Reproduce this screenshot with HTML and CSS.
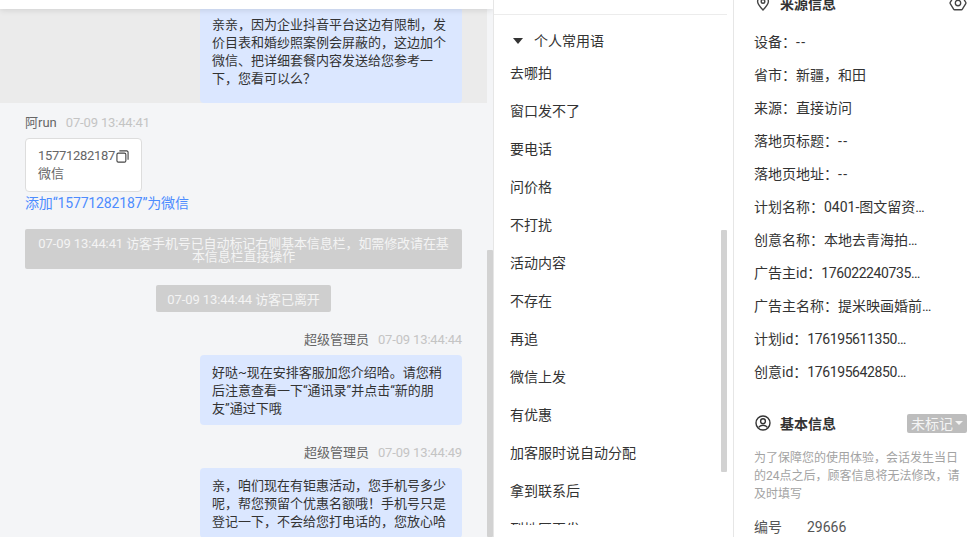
FILE: index.html
```html
<!doctype html>
<html lang="zh">
  <head>
    <meta charset="UTF-8" />
    <meta name="viewport" content="width=device-width, initial-scale=1.0" />
    <title>会话详情</title>
    <link rel="stylesheet" href="styles.css">
  </head>
  <body>
    <div class="page">
      <section class="chat">
        <div class="top-bar"></div>
        <div class="chat-scroll">
          <div class="highlight">
            <div class="bubble">亲亲，因为企业抖音平台这边有限制，发价目表和婚纱照案例会屏蔽的，这边加个微信、把详细套餐内容发送给您参考一下，您看可以么？</div>
          </div>

          <div class="msg-list">
            <div class="msg-head">
              <span class="name">阿run</span>
              <span class="time">07-09 13:44:41</span>
            </div>
            <div class="card">
              <div class="card-phone">
                15771282187<svg class="copy-icon" viewBox="0 0 14 14" fill="none" stroke="#444" stroke-width="1.2"><rect x="1" y="3.4" width="9.6" height="9.6" rx="1.5"/><path d="M3.6 1h8a1.4 1.4 0 0 1 1.4 1.4v8"/></svg>
              </div>
              <div>微信</div>
            </div>
            <div class="add-link">添加“15771282187”为微信</div>

            <div class="notice notice-wide">07-09 13:44:41 访客手机号已自动标记右侧基本信息栏，如需修改请在基本信息栏直接操作</div>
            <div class="notice">07-09 13:44:44 访客已离开</div>

            <div class="msg-head msg-head-right">
              <span class="name">超级管理员</span>
              <span class="time">07-09 13:44:44</span>
            </div>
            <div class="bubble">好哒~现在安排客服加您介绍哈。请您稍后注意查看一下“通讯录”并点击“新的朋友”通过下哦</div>

            <div class="msg-head msg-head-right">
              <span class="name">超级管理员</span>
              <span class="time">07-09 13:44:49</span>
            </div>
            <div class="bubble">亲，咱们现在有钜惠活动，您手机号多少呢，帮您预留个优惠名额哦！手机号只是登记一下，不会给您打电话的，您放心哈</div>
          </div>
        </div>
        <div class="scrollbar chat-thumb"></div>
      </section>

      <section class="phrases">
        <div class="phrases-line"></div>
        <div class="phrases-title"><span class="caret"></span>个人常用语</div>
        <ul class="phrase-list">
          <li>去哪拍</li>
          <li>窗口发不了</li>
          <li>要电话</li>
          <li>问价格</li>
          <li>不打扰</li>
          <li>活动内容</li>
          <li>不存在</li>
          <li>再追</li>
          <li>微信上发</li>
          <li>有优惠</li>
          <li>加客服时说自动分配</li>
          <li>拿到联系后</li>
          <li>到地区再发</li>
        </ul>
        <div class="scrollbar phrases-thumb"></div>
      </section>

      <aside class="info">
        <div class="section-title source-title">
          <svg class="title-icon pin-icon" viewBox="0 0 16 16" fill="none" stroke="#444" stroke-width="1.4"><path d="M8 15C5 12 2.6 9.5 2.6 6.6a5.4 5.4 0 0 1 10.8 0C13.4 9.5 11 12 8 15z"/><circle cx="8" cy="6.4" r="1.8"/></svg>
          <span>来源信息</span>
          <svg class="hex-icon" viewBox="0 0 16 16" fill="none" stroke="#444" stroke-width="1.2"><path d="M5 2h6a1 1 0 0 1 .9.5l3 5a1 1 0 0 1 0 1l-3 5a1 1 0 0 1-.9.5H5a1 1 0 0 1-.9-.5l-3-5a1 1 0 0 1 0-1l3-5A1 1 0 0 1 5 2z"/><circle cx="8" cy="8" r="2.4"/></svg>
        </div>
        <div class="info-row">设备：<span class="dash">--</span></div>
        <div class="info-row">省市：新疆，和田</div>
        <div class="info-row">来源：直接访问</div>
        <div class="info-row">落地页标题：<span class="dash">--</span></div>
        <div class="info-row">落地页地址：<span class="dash">--</span></div>
        <div class="info-row">计划名称：<span class="clip">0401-图文留资-婚纱照</span></div>
        <div class="info-row">创意名称：<span class="clip">本地去青海拍婚纱照</span></div>
        <div class="info-row">广告主id：<span class="clip num">1760222407351809</span></div>
        <div class="info-row">广告主名称：<span class="clip">提米映画婚前摄影</span></div>
        <div class="info-row">计划id：<span class="clip num">1761956113504296</span></div>
        <div class="info-row">创意id：<span class="clip num">1761956428501234</span></div>

        <div class="section-title base-title">
          <svg class="title-icon" viewBox="0 0 16 16" fill="none" stroke="#333" stroke-width="1.4"><circle cx="8" cy="8" r="7"/><circle cx="8" cy="6.2" r="2.4"/><path d="M3.6 12.4c1-1.6 2.6-2.2 4.4-2.2s3.4.6 4.4 2.2"/></svg>
          <span>基本信息</span>
          <div class="tag">未标记<span class="tag-caret"></span></div>
        </div>
        <p class="hint">为了保障您的使用体验，会话发生当日的24点之后，顾客信息将无法修改，请及时填写</p>
        <div class="field"><span class="field-label">编号</span>29666</div>
      </aside>
    </div>
  </body>
</html>
```

FILE: styles.css
```css
* {
  margin: 0;
  padding: 0;
  box-sizing: border-box;
}

html,
body {
  height: 100%;
  overflow: hidden;
}

body {
  font-family: Roboto, "Noto Sans CJK SC", "Noto Sans", sans-serif;
  font-size: 14px;
  color: #333;
  background: #fff;
}

.page {
  display: flex;
  height: 537px;
}

/* Chat column */
.chat {
  position: relative;
  width: 493px;
  height: 100%;
  overflow: hidden;
  background: #f4f5f7;
}

.top-bar {
  position: absolute;
  top: 0;
  left: 0;
  right: 0;
  height: 9px;
  background: #fff;
  box-shadow: 0 1px 6px rgba(0, 0, 0, 0.12);
}

.chat-scroll {
  width: 487px;
}

.highlight {
  display: flex;
  justify-content: flex-end;
  height: 103px;
  padding: 7px 25px 0;
  background: #ebebeb;
}

.bubble {
  width: 262px;
  padding: 9px 12px 7px;
  margin-left: auto;
  font-size: 13px;
  line-height: 18px;
  color: #333;
  background: #dbe7ff;
  border-radius: 4px;
}

.msg-list {
  display: flex;
  flex-direction: column;
  padding: 10px 25px 0;
}

.msg-head {
  display: flex;
  align-items: center;
  gap: 9px;
  height: 18px;
  padding-top: 2px;
  font-size: 13px;
  line-height: 18px;
}

.msg-head-right {
  justify-content: flex-end;
  margin-top: 18px;
  margin-bottom: 7px;
}

.name {
  color: #666;
}

.time {
  letter-spacing: -0.15px;
  color: #c4c4c4;
}

.card {
  width: 117px;
  height: 54px;
  margin-top: 7px;
  padding: 8px 12px 6px;
  font-size: 13px;
  line-height: 18px;
  color: #666;
  background: #fff;
  border: 1px solid #ddd;
  border-radius: 4px;
}

.card-phone {
  display: flex;
  align-items: center;
  letter-spacing: -0.3px;
  white-space: nowrap;
}

.copy-icon {
  width: 13px;
  height: 13px;
  margin-left: 1px;
  flex-shrink: 0;
}

.add-link {
  margin-top: 2px;
  font-size: 14px;
  line-height: 18px;
  letter-spacing: -0.15px;
  color: #4d8cff;
}

.notice {
  align-self: center;
  margin-top: 16px;
  padding: 8px 11px 6px;
  font-size: 13px;
  line-height: 13px;
  letter-spacing: -0.1px;
  text-align: center;
  color: #f4f4f4;
  background: #cfcfcf;
  border-radius: 2px;
}

.notice-wide {
  align-self: stretch;
  margin-top: 17px;
  padding-left: 8px;
  padding-right: 8px;
}

.scrollbar {
  position: absolute;
  width: 6px;
  background: #d2d2d2;
  border-radius: 1px;
}

.chat-thumb {
  top: 250px;
  right: 0;
  bottom: 0;
}

/* Phrase column */
.phrases {
  position: relative;
  width: 241px;
  height: 100%;
  overflow: hidden;
  border-left: 1px solid #e6e6e6;
  border-right: 1px solid #e6e6e6;
}

.phrases-line {
  width: 233px;
  height: 15px;
  border-bottom: 1px solid #ececec;
}

.phrases-title {
  display: flex;
  align-items: center;
  height: 20px;
  margin-top: 16px;
  padding-left: 19px;
  line-height: 20px;
  color: #333;
}

.caret {
  width: 0;
  height: 0;
  margin-right: 11px;
  border-top: 6px solid #333;
  border-left: 5px solid transparent;
  border-right: 5px solid transparent;
}

.phrase-list {
  height: 471px;
  margin-top: 3px;
  overflow: hidden;
  list-style: none;
}

.phrase-list li {
  height: 38px;
  padding: 9px 0 9px 16px;
  line-height: 20px;
  color: #333;
}

.phrases-thumb {
  top: 230px;
  left: 227px;
  height: 242px;
}

/* Info column */
.info {
  flex: 1;
  height: 100%;
  overflow: hidden;
  padding: 0 2px 0 20px;
}

.section-title {
  display: flex;
  align-items: center;
  height: 20px;
  font-weight: 700;
  color: #333;
}

.source-title {
  margin-top: -7px;
  margin-bottom: 13px;
}

.title-icon {
  width: 16px;
  height: 16px;
  margin-left: 1px;
  margin-right: 9px;
  flex-shrink: 0;
}

.hex-icon {
  width: 18px;
  height: 18px;
  margin-left: auto;
}

.info-row {
  display: flex;
  height: 33px;
  line-height: 20px;
  padding-top: 6px;
  white-space: nowrap;
  color: #333;
}

.dash {
  letter-spacing: 1.5px;
  font-variant-ligatures: none;
}

.clip {
  width: 103px;
  overflow: hidden;
  text-overflow: ellipsis;
}

.num {
  letter-spacing: -0.4px;
}

.base-title {
  margin-top: 24px;
}

.tag {
  display: flex;
  align-items: center;
  justify-content: center;
  width: 60px;
  height: 19px;
  margin-left: auto;
  font-weight: 400;
  color: #f4f4f4;
  background: #bdbdbd;
  border-radius: 2px;
}

.tag-caret {
  width: 0;
  height: 0;
  margin-left: 2px;
  border-top: 4px solid #f4f4f4;
  border-left: 4px solid transparent;
  border-right: 4px solid transparent;
}

.hint {
  margin-top: 16px;
  font-size: 12px;
  line-height: 18px;
  color: #a3a3a3;
}

.field {
  margin-top: 14px;
  line-height: 20px;
  color: #555;
}

.field-label {
  display: inline-block;
  width: 53px;
}
```
